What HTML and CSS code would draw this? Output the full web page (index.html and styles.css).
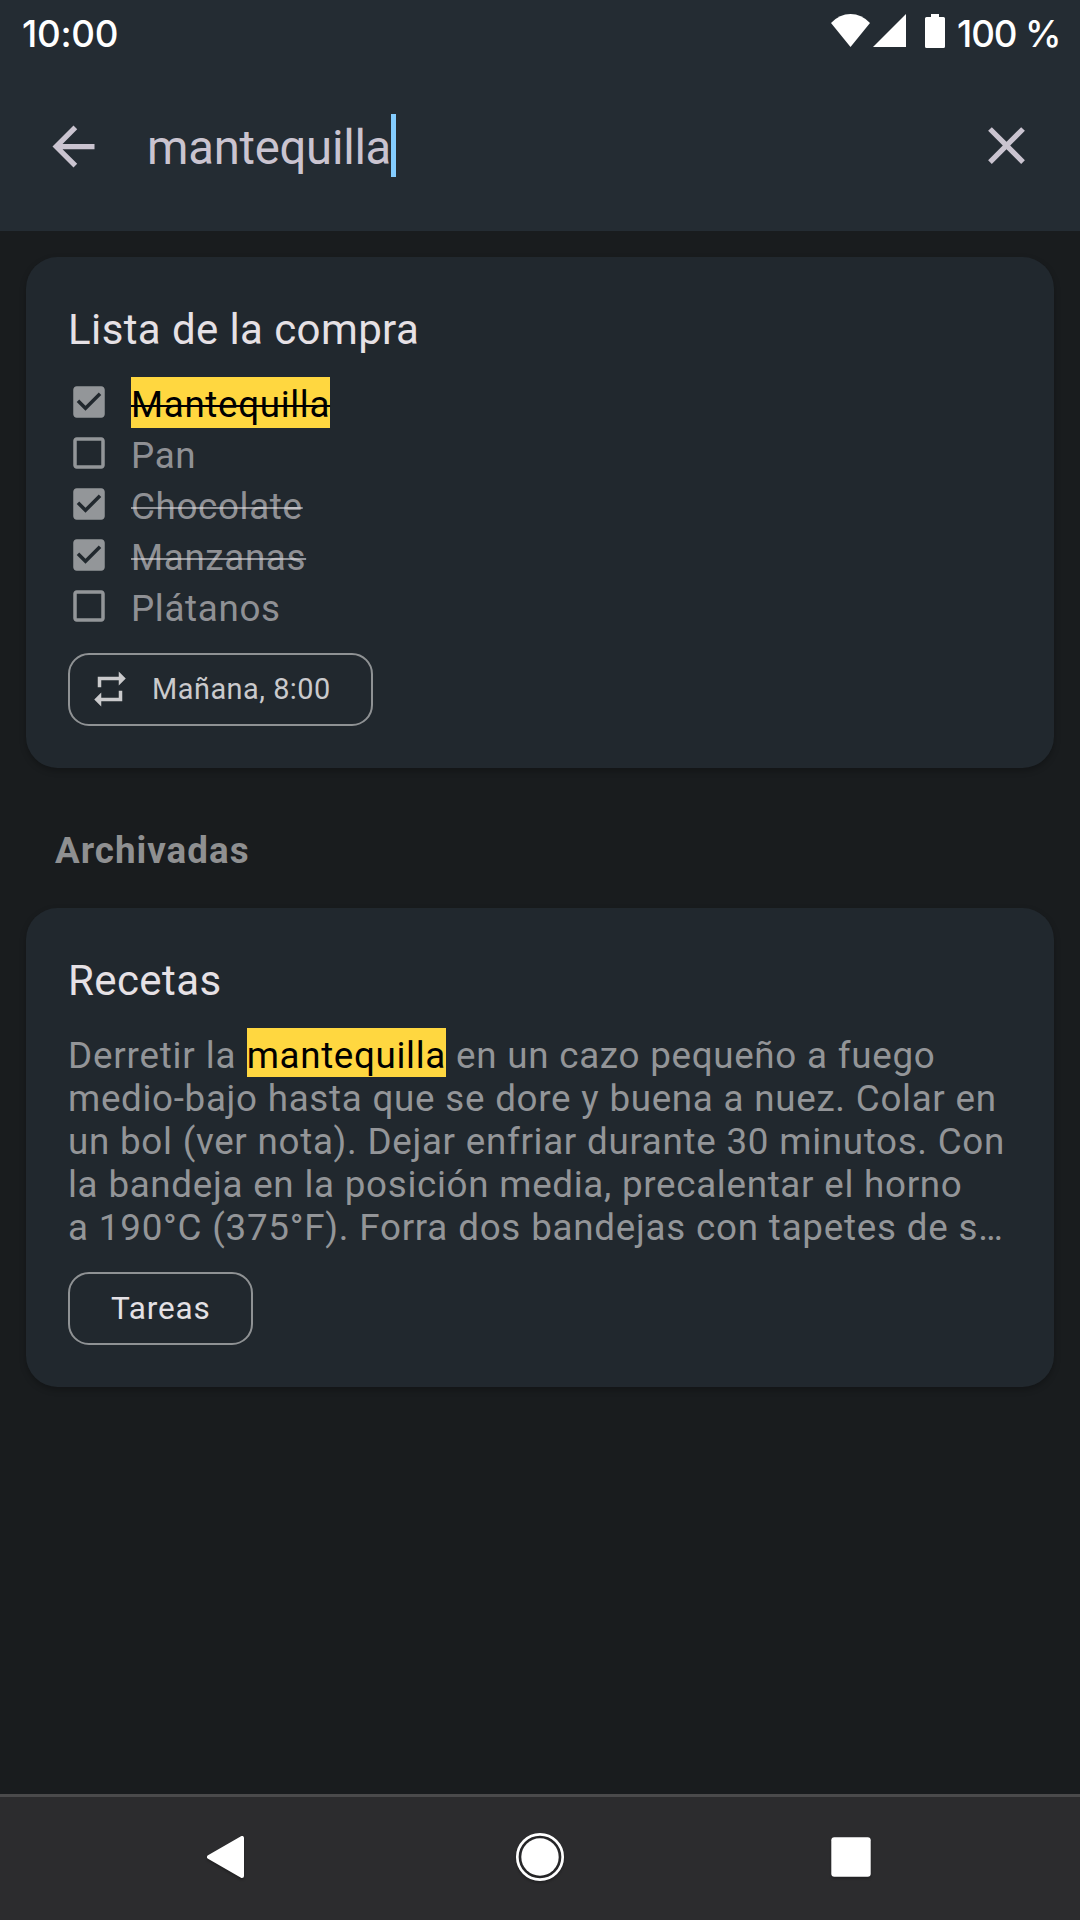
FILE: index.html
```html
<!DOCTYPE html>
<html lang="es">
<head>
<meta charset="utf-8">
<title>Buscar notas</title>
<link rel="stylesheet" href="styles.css">
</head>
<body>
<div class="screen">
  <header class="header">
    <div class="status">
      <span class="clock">10:00</span>
      <svg class="wifi" viewBox="0 0 39 33"><path d="M19.500 33L0 9Q8.500 0 19.500 0T39 9z"/></svg>
      <svg class="signal" viewBox="0 0 33 33"><path d="M33 0v33H0z"/></svg>
      <svg class="battery" viewBox="0 0 20 34"><path d="M6 0h8v3h4.500q1.500 0 1.500 1.500v28q0 1.500-1.500 1.500h-17Q0 34 0 32.500v-28Q0 3 1.500 3H6z"/></svg>
      <span class="charge">100 %</span>
    </div>
    <div class="search">
      <svg class="icon-lg" viewBox="0 0 24 24"><path d="M20 11H7.830l5.590-5.590L12 4l-8 8 8 8 1.410-1.410L7.830 13H20v-2z"/></svg>
      <div class="query">mantequilla</div>
      <div class="caret"></div>
      <svg class="icon-lg clear" viewBox="0 0 24 24"><path d="M19 6.410L17.590 5 12 10.590 6.410 5 5 6.410 10.590 12 5 17.590 6.410 19 12 13.410 17.590 19 19 17.590 13.410 12z"/></svg>
    </div>
  </header>

  <svg class="defs">
    <symbol id="on" viewBox="0 0 24 24"><path d="M19 3H5c-1.110 0-2 .9-2 2v14c0 1.100.89 2 2 2h14c1.110 0 2-.9 2-2V5c0-1.100-.89-2-2-2zm-9 14l-5-5 1.410-1.410L10 14.170l7.590-7.590L19 8l-9 9z"/></symbol>
    <symbol id="off" viewBox="0 0 24 24"><path d="M19 5v14H5V5h14m0-2H5c-1.100 0-2 .9-2 2v14c0 1.100.9 2 2 2h14c1.100 0 2-.9 2-2V5c0-1.100-.9-2-2-2z"/></symbol>
  </svg>

  <main class="notes">
    <article class="card">
      <h2 class="title">Lista de la compra</h2>
      <ul class="list">
        <li class="item"><svg class="check"><use href="#on"/></svg><span class="label done hit">Mantequilla</span></li>
        <li class="item"><svg class="check"><use href="#off"/></svg><span class="label">Pan</span></li>
        <li class="item"><svg class="check"><use href="#on"/></svg><span class="label done">Chocolate</span></li>
        <li class="item"><svg class="check"><use href="#on"/></svg><span class="label done">Manzanas</span></li>
        <li class="item"><svg class="check"><use href="#off"/></svg><span class="label">Plátanos</span></li>
      </ul>
      <div class="chip reminder">
        <svg class="repeat" viewBox="0 0 24 24"><path d="M7 7h10v3l4-4-4-4v3H5v6h2V7zm10 10H7v-3l-4 4 4 4v-3h12v-6h-2v4z"/></svg>
        <span>Mañana, 8:00</span>
      </div>
    </article>
    <h3 class="section">Archivadas</h3>
    <article class="card">
      <h2 class="title">Recetas</h2>
      <p class="body"><span class="lead">Derretir la </span><mark class="mark">mantequilla</mark> en un cazo pequeño a fuego<br>medio-bajo hasta que se dore y buena a nuez. Colar en<br>un bol (ver nota). Dejar enfriar durante 30 minutos. Con<br>la bandeja en la posición media, precalentar el horno<br><span class="last">a 190°C (375°F). Forra dos bandejas con tapetes de s…</span></p>
      <div class="chip tag">Tareas</div>
    </article>
  </main>

  <nav class="nav">
    <svg class="nav-icon" viewBox="0 0 60 60"><path d="M11 30L44 11v38z" stroke="#fff" stroke-width="4" stroke-linejoin="round"/></svg>
    <svg class="nav-icon" viewBox="0 0 60 60"><circle cx="30" cy="30" r="22.700" fill="none" stroke="#fff" stroke-width="2.700"/><circle cx="30" cy="30" r="18.700"/></svg>
    <svg class="nav-icon" viewBox="0 0 60 60"><rect x="9.300" y="10.300" width="39.400" height="39.400" rx="3"/></svg>
  </nav>
</div>
</body>
</html>
```
FILE: styles.css
```css
* { box-sizing: border-box; margin: 0; padding: 0; }
body { background: #191c1e; font-family: Roboto, sans-serif; }
svg { display: block; fill: currentColor; flex: none; }
.defs { display: none; }
.screen { width: 1080px; height: 1920px; display: flex; flex-direction: column; overflow: hidden; background: #191c1e; }

.header { height: 231px; flex: none; background: #242c33; }
.status { height: 63px; display: flex; align-items: flex-start; padding: 0 21px 0 22px; color: #fff; font: 500 36.75px/44px Inter, sans-serif; }
.clock { margin-top: 12px; letter-spacing: -0.3px; }
.wifi { width: 39px; height: 33px; margin: 14px 3px 0 auto; }
.signal { width: 33px; height: 33px; margin: 14px 19px 0 0; }
.battery { width: 20px; height: 34px; margin: 14px 12px 0 0; }
.charge { margin-top: 12px; width: 102px; letter-spacing: -1.1px; white-space: nowrap; }

.search { height: 168px; display: flex; align-items: flex-start; padding: 51px 42px 0; color: #cac4d0; }
.icon-lg { width: 63px; height: 63px; margin-top: 1px; }
.query { margin-left: 42px; font-size: 47.25px; line-height: 63px; padding-top: 3px; letter-spacing: -.25px; }
.caret { width: 5px; height: 63px; background: #84cdff; }
.clear { margin: 0 0 0 auto; }

.notes { flex: 1; padding: 26px; }
.card { background: #21282e; border-radius: 31.5px; padding: 48px 42px 42px; box-shadow: 0 3px 6px rgba(0, 0, 0, .25); }
.title { font-size: 42px; font-weight: 400; line-height: 50px; letter-spacing: .4px; color: #e6e1e5; }
.list { list-style: none; margin-top: 22px; }
.item { height: 51px; display: flex; }
.check { width: 42px; height: 42px; margin: 4px 21px 0 0; color: #939699; }
.label { height: 51px; padding-top: 6px; font-size: 36.75px; line-height: 43px; letter-spacing: .66px; color: rgba(230, 225, 229, .58); }
.done { text-decoration: line-through; text-decoration-thickness: 2.4px; }
.hit { background: #ffd740; color: #000; }

.chip { height: 73px; display: flex; align-items: center; width: fit-content; border: 2px solid #8f9294; border-radius: 21px; }
.reminder { width: 305px; margin-top: 21px; padding: 0 0 2px 19px; font-size: 28.9px; letter-spacing: .5px; color: #cacacc; }
.repeat { width: 42px; height: 42px; margin-right: 21px; }
.tag { width: 185px; margin-top: 23px; padding-left: 41px; font-size: 31.5px; letter-spacing: .8px; color: #e4e1e5; }

.section { padding: 61px 29px 0; height: 140px; font-size: 36.75px; line-height: 43px; font-weight: 700; letter-spacing: 1px; color: #8f9091; }
.body { margin-top: 28px; font-size: 36.75px; line-height: 43px; letter-spacing: .68px; word-spacing: .3px; color: #939598; white-space: nowrap; }
.lead { letter-spacing: .82px; }
.last { letter-spacing: .73px; }
.mark { background: #ffd740; color: #000; padding: 6px 0 0; letter-spacing: .66px; }

.nav { height: 126px; flex: none; border-top: 3px solid #4a4a4b; background: #2c2c2e; color: #fff; display: grid; grid-template-columns: repeat(3, 312px); justify-content: center; justify-items: center; padding-top: 30px; }
.nav-icon { width: 60px; height: 60px; filter: drop-shadow(0 2px 1px rgba(0, 0, 0, .25)); }
```
